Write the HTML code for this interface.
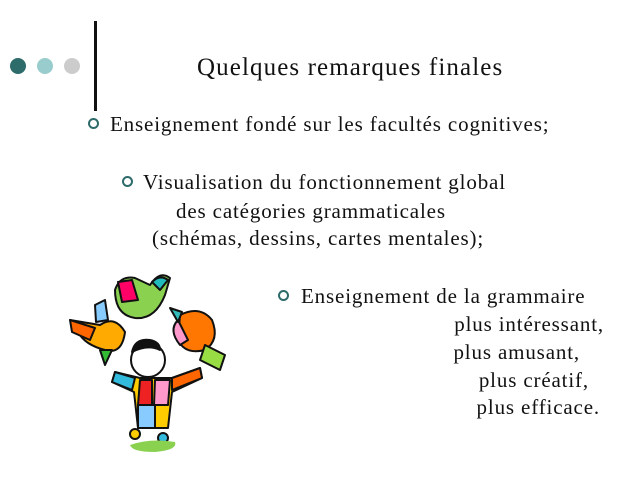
<!DOCTYPE html>
<html><head><meta charset="utf-8"><style>
body{margin:0;width:638px;height:478px;background:#fff;overflow:hidden;position:relative;font-family:"Liberation Serif",serif;color:#111}
.t{position:absolute;white-space:nowrap;font-size:21px;letter-spacing:0.85px;line-height:1}
.r{position:absolute;white-space:nowrap;font-size:21px;letter-spacing:0.85px;line-height:1;text-align:right}
.b{position:absolute;width:7px;height:7px;border:2px solid #2e6b6b;border-radius:50%}
.d{position:absolute;width:16px;height:16px;border-radius:50%;top:58px}
</style></head><body>
<div class="d" style="left:10px;background:#2e6b6b"></div>
<div class="d" style="left:37px;background:#99cccc"></div>
<div class="d" style="left:64px;background:#cccccc"></div>
<div style="position:absolute;left:94px;top:21px;width:3px;height:90px;background:#111"></div>
<div class="t" style="left:197px;top:55px;font-size:25px;letter-spacing:1.1px">Quelques remarques finales</div>
<div class="b" style="left:88px;top:118px"></div>
<div class="t" style="left:110px;top:114px">Enseignement fondé sur les facultés cognitives;</div>
<div class="b" style="left:122px;top:176px"></div>
<div class="t" style="left:143px;top:172px">Visualisation du fonctionnement global</div>
<div class="t" style="left:176px;top:201px">des catégories grammaticales</div>
<div class="t" style="left:152px;top:228px">(schémas, dessins, cartes mentales);</div>
<div class="b" style="left:278px;top:290px"></div>
<div class="t" style="left:301px;top:286px">Enseignement de la grammaire</div>
<div class="r" style="right:34px;top:314px">plus intéressant,</div>
<div class="r" style="right:58px;top:342px">plus amusant,</div>
<div class="r" style="right:49px;top:370px">plus créatif,</div>
<div class="r" style="right:38px;top:397px">plus efficace.</div>
<svg style="position:absolute;left:60px;top:260px" width="170" height="200" viewBox="0 0 170 200">
<g stroke="#111" stroke-width="2" stroke-linejoin="round">
<path d="M55 30 Q60 15 75 18 L90 25 Q100 10 110 18 L105 35 Q95 60 75 58 Q55 55 55 30Z" fill="#8bd150"/>
<path d="M58 22 L72 20 L78 40 L62 42Z" fill="#f06"/>
<path d="M92 22 Q100 14 108 20 L100 30Z" fill="#2bb"/>
<path d="M10 60 L40 65 Q55 55 65 72 Q62 95 45 90 Q25 85 18 72Z" fill="#fa0"/>
<path d="M10 60 L35 68 L30 80 L12 72Z" fill="#f60"/>
<path d="M35 45 L45 40 L48 60 L36 62Z" fill="#8cf"/>
<path d="M40 90 L45 105 L52 90Z" fill="#3b3"/>
<path d="M120 55 Q140 45 152 60 Q160 80 145 90 Q125 95 118 80Z" fill="#f70"/>
<path d="M118 60 Q108 70 120 85 L128 80Z" fill="#f9c"/>
<path d="M145 85 L165 95 L160 110 L140 100Z" fill="#9d4"/>
<path d="M110 48 L122 52 L118 62Z" fill="#3bb"/>
<circle cx="88" cy="100" r="17" fill="#fff"/>
<path d="M72 92 Q75 78 90 80 Q100 82 100 90 Q88 84 72 92Z" fill="#111"/>
<path d="M55 112 L80 118 L112 118 L140 108 L142 118 L112 132 L108 168 L78 168 L74 132 L52 122Z" fill="#fc0"/>
<path d="M80 120 L92 120 L92 145 L78 145Z" fill="#e22"/>
<path d="M95 120 L110 120 L108 145 L94 145Z" fill="#f9c"/>
<path d="M78 145 L95 145 L95 168 L78 168Z" fill="#8cf"/>
<path d="M55 112 L75 118 L72 130 L52 122Z" fill="#3bd"/>
<path d="M112 118 L140 108 L142 118 L112 130Z" fill="#f60"/>
<circle cx="75" cy="174" r="5" fill="#fc0"/>
<circle cx="103" cy="178" r="5" fill="#3bd"/>
</g>
<path d="M70 185 Q90 178 115 182 Q118 190 95 192 Q72 192 70 185Z" fill="#8bd150"/>
</svg>
</body></html>
